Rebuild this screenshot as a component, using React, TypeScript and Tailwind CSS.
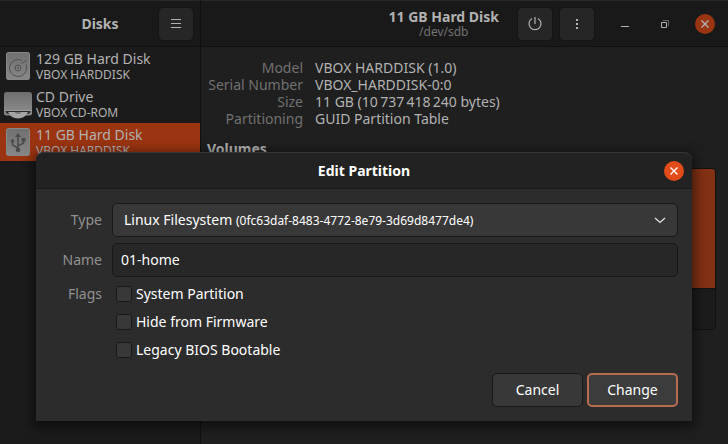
import type { ReactNode } from 'react';

function DiskIcon({ kind }: { kind: 'hdd' | 'cd' | 'usb' }) {
  return (
    <svg width="32" height="32" viewBox="0 0 32 32" fill="none" className="shrink-0" aria-hidden="true">
      <defs>
        <linearGradient id={`metal-${kind}`} x1="0" y1="0" x2="0" y2="1">
          <stop offset="0" stopColor="#6f6f6f" />
          <stop offset="1" stopColor="#888" />
        </linearGradient>
      </defs>
      {kind === 'cd' ? (
        <>
          <path d="M2 21H30V25Q30 27.500 27 27.500H5Q2 27.500 2 25Z" fill="#8c8c8c" />
          <path d="M3.500 23H28.500V24Q28 26 25 26H7Q4 26 3.500 24Z" fill="#2c2c2c" />
          <path d="M6 24H26Q23 30.500 16 30.500T6 24Z" fill="#a6a6a6" />
          <path d="M12.500 24H19.500Q18.500 26 16 26T12.500 24Z" fill="#777" />
          <rect x="2" y="4" width="28" height="19" rx="2.500" fill="url(#metal-cd)" />
          <path d="M2 22.500H30" stroke="#9a9a9a" />
        </>
      ) : (
        <>
          <rect x="4" y="2" width="24" height="28" rx="3" fill={`url(#metal-${kind})`} />
          <rect x="4.500" y="2.500" width="23" height="27" rx="2.500" stroke="#888" />
        </>
      )}
      {kind === 'hdd' && (
        <g stroke="#505050">
          <path d="M20 10.500A8.500 8.500 0 1 0 24.500 18V14.500" />
          <path d="M24.500 10.500L19.500 13.500" />
          <circle cx="16" cy="18" r="3" />
          <circle cx="16" cy="18" r="1" fill="#505050" stroke="none" />
        </g>
      )}
      {kind === 'usb' && (
        <g stroke="#4b4b4b" strokeWidth="1.600">
          <path d="M16 24V9M16 22L10.500 19V15M16 20L21.500 17V13" />
          <path d="M13 11L16 7L19 11Z" fill="#4b4b4b" stroke="none" />
          <circle cx="16" cy="24" r="2.300" fill="#4b4b4b" stroke="none" />
          <circle cx="10.500" cy="15" r="1.800" fill="#4b4b4b" stroke="none" />
          <rect x="19.500" y="12" width="4" height="3.500" fill="#4b4b4b" stroke="none" />
        </g>
      )}
    </svg>
  );
}

function HeaderButton({ label, children }: { label: string; children: ReactNode }) {
  return (
    <button
      aria-label={label}
      className="flex h-[34px] w-9 shrink-0 items-center justify-center rounded-[5px] border border-[#141414] bg-[#262626]"
    >
      <svg width="16" height="16" viewBox="0 0 16 16" fill="none" stroke="#b2b2b2" aria-hidden="true">
        {children}
      </svg>
    </button>
  );
}

function CloseGlyph({ color }: { color: string }) {
  return (
    <svg width="8" height="8" viewBox="0 0 8 8" fill="none" stroke={color} strokeWidth="1.400" aria-hidden="true">
      <path d="M0.500 0.500L7.500 7.500M7.500 0.500L0.500 7.500" />
    </svg>
  );
}

const disks = [
  { kind: 'hdd', name: '129 GB Hard Disk', model: 'VBOX HARDDISK', selected: false },
  { kind: 'cd', name: 'CD Drive', model: 'VBOX CD-ROM', selected: false },
  { kind: 'usb', name: '11 GB Hard Disk', model: 'VBOX HARDDISK', selected: true },
] as const;

const details = [
  ['Model', 'VBOX HARDDISK (1.0)'],
  ['Serial Number', 'VBOX_HARDDISK-0:0'],
  ['Size', '11 GB (10\u2009737\u2009418\u2009240 bytes)'],
  ['Partitioning', 'GUID Partition Table'],
];

const flags = ['System Partition', 'Hide from Firmware', 'Legacy BIOS Bootable'];

function Sidebar() {
  return (
    <aside className="flex w-[201px] shrink-0 flex-col border-r border-[#111] bg-[#1b1b1b]">
      <header className="grid h-[47px] shrink-0 grid-cols-[1fr_auto_1fr] items-center border-t border-b border-t-[#292929] border-b-[#101010] bg-[#191919] px-1.5">
        <h1 className="col-start-2 font-bold">Disks</h1>
        <div className="flex justify-end">
          <HeaderButton label="Menu">
            <path d="M3 3.500H13M3 7.500H13M3 11.500H13" />
          </HeaderButton>
        </div>
      </header>
      <ul>
        {disks.map((disk) => (
          <li
            key={disk.name}
            className={`flex h-[38px] items-center gap-0.5 pl-0.5 ${disk.selected ? 'bg-[#9b3410]' : ''}`}
          >
            <DiskIcon kind={disk.kind} />
            <div className="whitespace-nowrap">
              <div className="leading-[17px]">{disk.name}</div>
              <div className="text-xs leading-[15px]">{disk.model}</div>
            </div>
          </li>
        ))}
      </ul>
    </aside>
  );
}

function DiskPane() {
  return (
    <main className="flex min-w-0 flex-1 flex-col bg-[#1f1f1f]">
      <header className="flex h-[47px] shrink-0 items-center justify-end border-t border-b border-t-[#292929] border-b-[#101010] bg-[#191919] pr-[13px]">
        <div className="mr-[18px] text-center whitespace-nowrap">
          <h2 className="leading-[17px] font-bold">11 GB Hard Disk</h2>
          <div className="text-xs leading-[14px] text-[#717171]">/dev/sdb</div>
        </div>
        <div className="flex gap-1.5">
          <HeaderButton label="Power off">
            <path d="M8 1V8M5 2.500A6 6 0 1 0 11 2.500" strokeWidth="1.200" />
          </HeaderButton>
          <HeaderButton label="Drive options">
            <path d="M8 3V5M8 7V9M8 11V13" strokeWidth="2" />
          </HeaderButton>
        </div>
        <div className="ml-5 flex items-center gap-5">
          <button aria-label="Minimize" className="flex size-5 items-center justify-center">
            <svg width="8" height="8" stroke="#b2b2b2" aria-hidden="true">
              <path d="M0 6.500H8" />
            </svg>
          </button>
          <button aria-label="Restore" className="flex size-5 items-center justify-center">
            <svg width="8" height="8" fill="none" stroke="#b2b2b2" aria-hidden="true">
              <path d="M0.500 2.500H5.500V7.500H0.500Z" />
              <path d="M2 0.500H7.500V6" stroke="#666" />
            </svg>
          </button>
          <button aria-label="Close window" className="flex size-5 items-center justify-center rounded-full bg-[#9b3410]">
            <CloseGlyph color="#b2b2b2" />
          </button>
        </div>
      </header>
      <div className="flex flex-col px-1.5 pt-3 pr-3">
        <dl className="grid grid-cols-[96px_1fr] gap-x-3 leading-[17px] whitespace-nowrap">
          {details.map(([term, value]) => (
            <div key={term} className="contents">
              <dt className="text-right text-[#717171]">{term}</dt>
              <dd>{value}</dd>
            </div>
          ))}
        </dl>
        <h3 className="mt-3 leading-5 font-bold">Volumes</h3>
        <div className="mt-[9px] rounded-[4px] border border-[#111] bg-[#1b1b1b]">
          <div className="h-[120px] rounded-t-[3px] border-b border-[#111] bg-[#833115]" />
          <div className="h-10" />
        </div>
      </div>
    </main>
  );
}

function EditPartitionDialog() {
  return (
    <div
      role="dialog"
      aria-labelledby="dialog-title"
      className="absolute inset-x-9 top-[152px] rounded-t-lg bg-[#2c2c2c] text-white shadow-[0_3px_12px_3px_rgba(0,0,0,0.5)]"
    >
      <header className="grid h-[37px] grid-cols-[1fr_auto_1fr] items-center rounded-t-lg border-t border-b border-t-[#363636] border-b-[#181818] bg-[#222] px-2">
        <h2 id="dialog-title" className="col-start-2 font-bold">Edit Partition</h2>
        <button aria-label="Close" className="flex size-5 items-center justify-center justify-self-end rounded-full bg-[#e24c1a]">
          <CloseGlyph color="#fff" />
        </button>
      </header>
      <form className="p-3.5" onSubmit={(event) => event.preventDefault()}>
        <div className="grid grid-cols-[52px_1fr] items-center gap-x-2.5 gap-y-1.5">
          <label htmlFor="type" className="text-right text-[#919191]">Type</label>
          <div className="grid items-center">
            <select
              id="type"
              className="col-start-1 row-start-1 h-[34px] w-full appearance-none rounded-[5px] border border-[#181818] bg-[#383838] text-transparent"
            >
              <option value="linux" aria-label="Linux Filesystem" />
            </select>
            <div className="pointer-events-none col-start-1 row-start-1 flex items-center justify-between px-3 whitespace-nowrap">
              <span>
                Linux Filesystem <span className="text-xs">(0fc63daf-8483-4772-8e79-3d69d8477de4)</span>
              </span>
              <svg width="12" height="8" viewBox="0 0 12 8" fill="none" stroke="#e8e8e8" strokeWidth="1.200" aria-hidden="true">
                <path d="M1 2L6 6.500L11 2" />
              </svg>
            </div>
          </div>
          <label htmlFor="name" className="text-right text-[#919191]">Name</label>
          <input
            id="name"
            type="text"
            defaultValue="01-home"
            className="h-[34px] w-full rounded-[5px] border border-[#181818] bg-[#272727] px-2 pb-0.5"
          />
        </div>
        <div role="group" aria-labelledby="flags-label" className="mt-[7px] grid grid-cols-[52px_1fr] gap-x-3.5">
          <span id="flags-label" className="text-right leading-5 text-[#919191]">Flags</span>
          <div className="flex flex-col items-start gap-2">
            {flags.map((flag) => (
              <label key={flag} className="flex h-5 items-center gap-1">
                <input
                  type="checkbox"
                  className="size-4 appearance-none rounded-[3px] border border-[#181818] bg-[#383838]"
                />
                {flag}
              </label>
            ))}
          </div>
        </div>
        <div className="mt-[13px] flex justify-end gap-1">
          <button type="button" className="h-[34px] w-[91px] rounded-[5px] border border-[#181818] bg-[#383838]">
            Cancel
          </button>
          <button type="submit" className="h-[34px] w-[91px] rounded-[5px] border-2 border-[#b96b50] bg-[#3c3c3c]">
            Change
          </button>
        </div>
      </form>
    </div>
  );
}

export default function App() {
  return (
    <div className="relative flex h-screen overflow-hidden bg-[#1b1b1b] font-['Noto_Sans',sans-serif] text-sm text-[#b2b2b2]">
      <Sidebar />
      <DiskPane />
      <EditPartitionDialog />
    </div>
  );
}
